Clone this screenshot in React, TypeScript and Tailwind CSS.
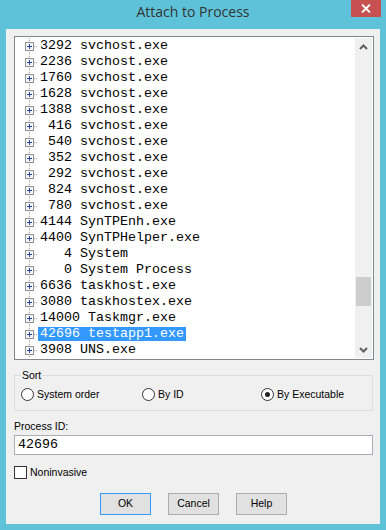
const rows: [number, string][] = [
  [3292, "svchost.exe"],
  [2236, "svchost.exe"],
  [1760, "svchost.exe"],
  [1628, "svchost.exe"],
  [1388, "svchost.exe"],
  [416, "svchost.exe"],
  [540, "svchost.exe"],
  [352, "svchost.exe"],
  [292, "svchost.exe"],
  [824, "svchost.exe"],
  [780, "svchost.exe"],
  [4144, "SynTPEnh.exe"],
  [4400, "SynTPHelper.exe"],
  [4, "System"],
  [0, "System Process"],
  [6636, "taskhost.exe"],
  [3080, "taskhostex.exe"],
  [14000, "Taskmgr.exe"],
  [42696, "testapp1.exe"],
  [3908, "UNS.exe"],
];

const SELECTED = 42696;

function TreeGlyph() {
  return (
    <svg width="22" height="16" viewBox="0 0 22 16" className="shrink-0" shapeRendering="crispEdges">
      <line x1="13.5" y1="0" x2="13.5" y2="16" stroke="#a0a0a0" strokeDasharray="1 1" />
      <line x1="18" y1="8.5" x2="22" y2="8.5" stroke="#a0a0a0" strokeDasharray="1 1" />
      <rect x="9.5" y="4.5" width="8" height="8" fill="#f6f6f6" stroke="#919191" />
      <line x1="11" y1="8.5" x2="16" y2="8.5" stroke="#2245a8" />
      <line x1="13.5" y1="6" x2="13.5" y2="11" stroke="#2245a8" />
    </svg>
  );
}

function Radio({ checked, label, width }: { checked?: boolean; label: string; width: string }) {
  return (
    <div className={`flex items-center ${width}`}>
      <div className="flex h-[13px] w-[13px] shrink-0 items-center justify-center rounded-full border border-[#333] bg-white">
        {checked && <div className="h-[5px] w-[5px] rounded-full bg-[#222]" />}
      </div>
      <span className="ml-[3px] leading-[13px]">{label}</span>
    </div>
  );
}

function Button({ label, primary }: { label: string; primary?: boolean }) {
  return (
    <div
      className={`flex h-[22px] w-[51px] items-center justify-center border bg-[#e1e1e1] ${
        primary ? "border-[#3399ff]" : "border-[#adadad]"
      }`}
    >
      {label}
    </div>
  );
}

export default function App() {
  return (
    <div className="flex h-[530px] w-[386px] flex-col bg-[#5ec3d8] font-['Liberation_Sans',Arial,sans-serif] text-[10.5px] text-black">
      <div className="relative flex h-[29px] shrink-0 justify-center pt-[4px]">
        <span className="font-['Open_Sans',sans-serif] text-[14px] leading-[16px] text-[#333]">Attach to Process</span>
        <div className="absolute right-[5px] top-0 flex h-[17px] w-[30px] items-center justify-center bg-[#c75050]">
          <svg width="10" height="9" viewBox="0 0 10 9">
            <path d="M1 0.5 L9 8.5 M9 0.5 L1 8.5" stroke="#fff" strokeWidth="1.8" />
          </svg>
        </div>
      </div>

      <div className="mx-[6px] flex h-[495px] flex-col bg-[#f0f0f0] pl-[8px] pt-[7px]">
        <div className="flex h-[324px] w-[360px] border border-[#828790] bg-white p-[1px]">
          <div className="flex flex-1 flex-col overflow-hidden font-['Liberation_Mono','Courier_New',monospace] text-[13.33px]">
            {rows.map(([id, name]) => {
              const text = `${String(id).padStart(4, " ")} ${name}`;
              const sel = id === SELECTED;
              return (
                <div key={id} className="flex h-[16px] items-center">
                  <TreeGlyph />
                  <span
                    className={`whitespace-pre px-[2px] ${
                      sel ? "h-[14px] bg-[#3399ff] leading-[14px] text-white" : "leading-[16px]"
                    }`}
                  >
                    {text}
                  </span>
                </div>
              );
            })}
          </div>
          <div className="flex w-[17px] flex-col bg-[#f0f0f0]">
            <div className="flex h-[17px] items-center justify-center">
              <svg width="9" height="6" viewBox="0 0 9 6">
                <path d="M1 5 L4.5 1.5 L8 5" fill="none" stroke="#606060" strokeWidth="2" />
              </svg>
            </div>
            <div className="flex-1">
              <div className="mx-[1px] mt-[222px] h-[29px] bg-[#cdcdcd]" />
            </div>
            <div className="flex h-[17px] items-center justify-center">
              <svg width="9" height="6" viewBox="0 0 9 6">
                <path d="M1 1 L4.5 4.5 L8 1" fill="none" stroke="#606060" strokeWidth="2" />
              </svg>
            </div>
          </div>
        </div>

        <fieldset className="mt-[9px] w-[359px] border border-[#dcdcdc] pb-[9px] pt-[7px]">
          <legend className="ml-[6px] px-[1px] leading-[12px]">Sort</legend>
          <div className="ml-[6px] flex items-center">
            <Radio label="System order" width="w-[121px]" />
            <Radio label="By ID" width="w-[119px]" />
            <Radio label="By Executable" width="w-[110px]" checked />
          </div>
        </fieldset>

        <div className="mt-[9px] leading-[12px]">Process ID:</div>
        <div className="mt-[3px] flex h-[20px] w-[359px] items-center border border-[#abadb3] bg-white px-[3px] font-['Liberation_Mono','Courier_New',monospace] text-[13.33px] leading-[18px]">
          42696
        </div>

        <div className="mt-[11px] flex items-center">
          <div className="h-[13px] w-[13px] border border-[#333] bg-white" />
          <span className="ml-[3px] leading-[13px]">Noninvasive</span>
        </div>

        <div className="mt-[14px] flex w-[359px] justify-center gap-[17px]">
          <Button label="OK" primary />
          <Button label="Cancel" />
          <Button label="Help" />
        </div>
      </div>
    </div>
  );
}
